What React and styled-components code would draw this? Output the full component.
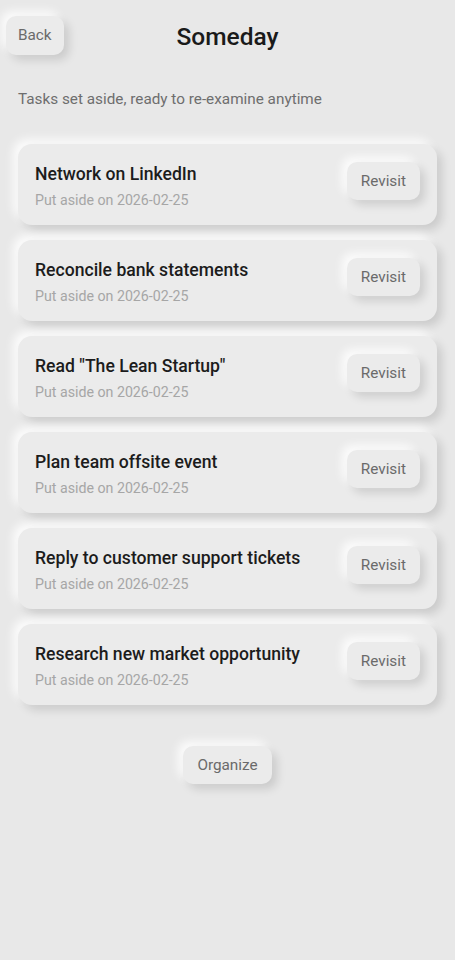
import styled, { createGlobalStyle } from "styled-components";

const GlobalStyle = createGlobalStyle`
  body {
    margin: 0;
    background: #e8e8e8;
    font-family: Roboto, "Liberation Sans", sans-serif;
  }
`;

const tasks = [
  "Network on LinkedIn",
  "Reconcile bank statements",
  'Read "The Lean Startup"',
  "Plan team offsite event",
  "Reply to customer support tickets",
  "Research new market opportunity",
];

// Shared soft raised shadow
const raised = `
  background: #ebebeb;
  box-shadow: 5px 5px 10px rgba(0, 0, 0, 0.13), -5px -5px 10px rgba(255, 255, 255, 0.85);
`;

const Page = styled.div`
  min-height: 960px;
  background: #e8e8e8;
  padding: 15px 18px 40px 18px;
  box-sizing: border-box;
`;

const Header = styled.header`
  display: grid;
  grid-template-columns: 1fr auto 1fr;
  align-items: center;
  height: 40px;
`;

const SoftButton = styled.button`
  ${raised}
  border: none;
  border-radius: 10px;
  font-family: inherit;
  font-size: 15.3px;
  color: #6a6a6a;
  height: ${(p) => p.$h || 38}px;
  padding: 0 ${(p) => p.$px || 14}px;
  cursor: pointer;
`;

const BackButton = styled(SoftButton)`
  justify-self: start;
  margin-left: -12px;
`;

const Title = styled.h1`
  margin: 0;
  margin-top: 2px;
  font-size: 24.5px;
  font-weight: 500;
  color: #1a1a1a;
`;

const Subtitle = styled.p`
  margin: 35px 0 0 0;
  font-size: 15.3px;
  color: #6e6e6e;
`;

const List = styled.div`
  display: flex;
  flex-direction: column;
  gap: 15px;
  margin-top: 36px;
`;

const Card = styled.div`
  ${raised}
  border-radius: 14px;
  height: 81px;
  box-sizing: border-box;
  padding: 0 17px;
  display: flex;
  align-items: center;
  justify-content: space-between;
`;

const Info = styled.div`
  display: flex;
  flex-direction: column;
  gap: 8px;
  margin-top: 3px;
`;

const TaskName = styled.div`
  font-size: 17.6px;
  font-weight: 500;
  color: #1c1c1c;
`;

const TaskDate = styled.div`
  font-size: 14.2px;
  color: #a6a6a6;
`;

const RevisitButton = styled(SoftButton)`
  margin-top: -8px;
`;

const Footer = styled.div`
  display: flex;
  justify-content: center;
  margin-top: 41px;
`;

export default function App() {
  return (
    <Page>
      <GlobalStyle />
      <Header>
        <BackButton $h={39} $px={12}>Back</BackButton>
        <Title>Someday</Title>
        <span />
      </Header>
      <Subtitle>Tasks set aside, ready to re-examine anytime</Subtitle>
      <List>
        {tasks.map((t) => (
          <Card key={t}>
            <Info>
              <TaskName>{t}</TaskName>
              <TaskDate>Put aside on 2026-02-25</TaskDate>
            </Info>
            <RevisitButton>Revisit</RevisitButton>
          </Card>
        ))}
      </List>
      <Footer>
        <SoftButton>Organize</SoftButton>
      </Footer>
    </Page>
  );
}
